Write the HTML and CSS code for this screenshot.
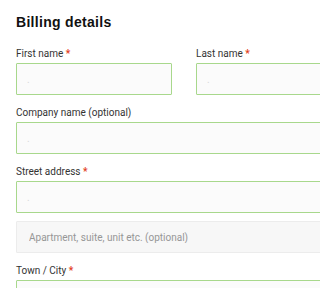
FILE: index.html
```html
<!DOCTYPE html>
<html lang="en">
<head>
<meta charset="utf-8">
<title>Billing details</title>
<link rel="stylesheet" href="styles.css">
</head>
<body>
<div class="page">
<form class="billing">
  <h3 class="title">Billing details</h3>
  <div class="row two">
    <div class="field">
      <label class="label">First name <abbr class="req">*</abbr></label>
      <input class="input" type="text" placeholder=".">
    </div>
    <div class="field">
      <label class="label">Last name <abbr class="req">*</abbr></label>
      <input class="input" type="text" placeholder=".">
    </div>
  </div>
  <div class="row field">
    <label class="label">Company name (optional)</label>
    <input class="input" type="text" placeholder=".">
  </div>
  <div class="row field">
    <label class="label">Street address <abbr class="req">*</abbr></label>
    <input class="input" type="text" placeholder=".">
    <input class="input muted" type="text" placeholder="Apartment, suite, unit etc. (optional)">
  </div>
  <div class="row field">
    <label class="label">Town / City <abbr class="req">*</abbr></label>
    <input class="input" type="text" placeholder=".">
  </div>
</form>
</div>
</body>
</html>
```
FILE: styles.css
```css
html {
  overflow: hidden;
  background: #ffffff;
}
body {
  margin: 0;
  overflow: hidden;
  background: #ffffff;
  font-family: Roboto, "Liberation Sans", Arial, sans-serif;
  color: #333333;
}
.page {
  width: 100vw;
  height: 100vh;
  overflow: hidden;
}
.billing {
  width: 336px;
  padding: 12px 16px 0 16px;
  display: flex;
  flex-direction: column;
  gap: 9px;
}
.title {
  margin: 0 0 4px 0;
  font-family: "Liberation Sans", Arial, sans-serif;
  font-weight: 700;
  font-size: 14px;
  line-height: 20px;
  letter-spacing: 0.3px;
  color: #111111;
}
.row.two {
  display: grid;
  grid-template-columns: 156px 156px;
  column-gap: 24px;
}
.field {
  display: flex;
  flex-direction: column;
}
.label {
  font-size: 10px;
  line-height: 18px;
  color: #333333;
}
.req {
  color: #e2401c;
  text-decoration: none;
  border: 0;
  font-weight: 700;
}
.input {
  box-sizing: border-box;
  width: 100%;
  height: 32px;
  margin: 0;
  padding: 0 10px;
  border: 1px solid #a8d88c;
  border-radius: 1px;
  background: #fbfbfb;
  font-family: Roboto, "Liberation Sans", Arial, sans-serif;
  font-size: 10px;
  color: #333333;
  outline: none;
}
.input::placeholder {
  color: #d8d8d8;
}
.input.muted {
  margin-top: 8px;
  border-color: #ececec;
  background: #f7f7f7;
  padding-left: 12px;
}
.input.muted::placeholder {
  color: #969696;
}
```
